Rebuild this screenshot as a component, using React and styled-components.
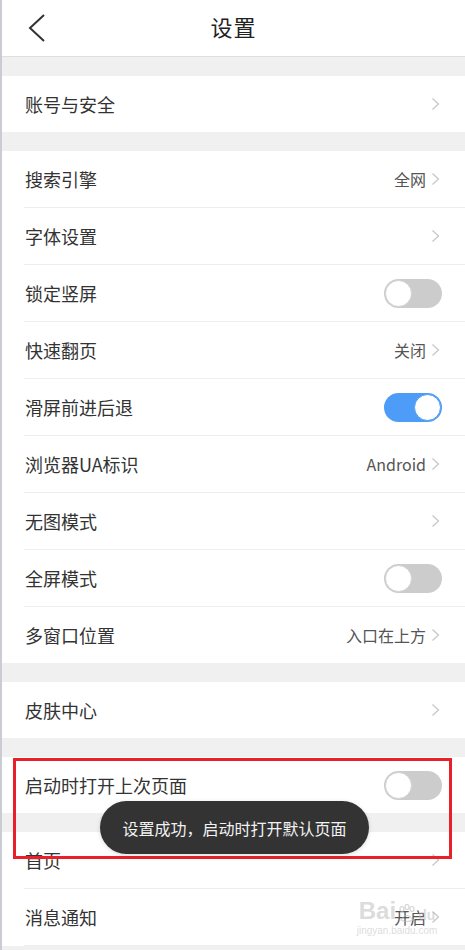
import React from "react";
import styled, { createGlobalStyle } from "styled-components";

const Global = createGlobalStyle`
  html, body { margin: 0; padding: 0; background: #fff; }
  body { font-family: "Noto Sans CJK SC", "Noto Sans", sans-serif; }
`;

const Page = styled.div`
  position: relative;
  width: 465px;
  height: 950px;
  overflow: hidden;
  background: #f0f0f0;
  box-sizing: border-box;
  border-left: 2px solid #c9ccd1;
`;

const Header = styled.header`
  height: 56px;
  background: #fff;
  border-bottom: 1px solid #dedede;
  display: flex;
  align-items: center;
  justify-content: center;
  position: relative;
`;

const BackBtn = styled.div`
  position: absolute;
  left: 24px;
  top: 13px;
  width: 22px;
  height: 30px;
  display: flex;
`;

const Title = styled.h1`
  margin: 0 0 4px 0;
  font-size: 22px;
  font-weight: 400;
  color: #222;
  letter-spacing: 1px;
`;

const Group = styled.section`
  background: #fff;
  margin-top: 19px;
`;

const Row = styled.div`
  padding-left: 22px;
  background: #fff;
`;

const RowInner = styled.div`
  height: 56px;
  display: flex;
  align-items: center;
  justify-content: space-between;
  padding-right: ${(p) => (p.$toggle ? "23px" : "25px")};
  border-bottom: ${(p) => (p.$last ? "none" : "1px solid #eeeeee")};
`;

const Label = styled.span`
  font-size: 18px;
  color: #333;
  padding-left: 1px;
`;

const Right = styled.div`
  display: flex;
  align-items: center;
  gap: 5px;
`;

const Value = styled.span`
  font-size: 16px;
  color: #555;
`;

const Track = styled.div`
  width: 58px;
  height: 29px;
  border-radius: 15px;
  box-sizing: border-box;
  background: ${(p) => (p.$on ? "#4d9cf8" : "#cccccc")};
  position: relative;
`;

const Knob = styled.div`
  position: absolute;
  top: 1px;
  ${(p) => (p.$on ? "right: 1px;" : "left: 1px;")}
  width: 27px;
  height: 27px;
  border-radius: 50%;
  background: #fff;
  box-sizing: border-box;
  border: 1px solid ${(p) => (p.$on ? "#4d9cf8" : "#d2d2d2")};
`;

const Toast = styled.div`
  position: absolute;
  left: 98px;
  top: 801px;
  width: 269px;
  height: 53px;
  border-radius: 27px;
  background: #333333;
  color: #f2f2f2;
  font-size: 16px;
  display: flex;
  align-items: center;
  justify-content: center;
  box-shadow: 0 1px 4px rgba(0, 0, 0, 0.15);
`;

const RedBox = styled.div`
  position: absolute;
  left: 11px;
  top: 758px;
  width: 439px;
  height: 101px;
  box-sizing: border-box;
  border: 3px solid #e8202a;
  pointer-events: none;
`;

const Watermark = styled.div`
  position: absolute;
  left: 340px;
  top: 898px;
  width: 110px;
  display: flex;
  flex-direction: column;
  align-items: center;
  color: rgba(185, 185, 185, 0.5);
  font-family: "Liberation Sans", sans-serif;
  pointer-events: none;
`;

const WmTop = styled.div`
  display: flex;
  align-items: flex-end;
  gap: 1px;
  font-size: 24px;
  font-weight: 700;
  line-height: 26px;
`;

const WmSmall = styled.span`
  font-size: 14px;
  line-height: 18px;
`;

const WmSub = styled.div`
  font-size: 10px;
  line-height: 14px;
`;

const Chevron = () => (
  <svg width="9" height="14" viewBox="0 0 9 14">
    <polyline points="1.5,1.5 7.5,7 1.5,12.5" fill="none" stroke="#c8c8c8" strokeWidth="1.3" />
  </svg>
);

const Toggle = ({ on }) => (
  <Track $on={on}>
    <Knob $on={on} />
  </Track>
);

const Item = ({ label, value, toggle, on, last }) => (
  <Row>
    <RowInner $toggle={toggle} $last={last}>
      <Label>{label}</Label>
      {toggle ? (
        <Toggle on={on} />
      ) : (
        <Right>
          {value && <Value>{value}</Value>}
          <Chevron />
        </Right>
      )}
    </RowInner>
  </Row>
);

export default function App() {
  return (
    <>
      <Global />
      <Page>
        <Header>
          <BackBtn>
            <svg width="22" height="30" viewBox="0 0 22 30">
              <polyline points="18,2 4,15 18,28" fill="none" stroke="#333" strokeWidth="2" />
            </svg>
          </BackBtn>
          <Title>设置</Title>
        </Header>

        <Group>
          <Item label="账号与安全" last />
        </Group>

        <Group>
          <Item label="搜索引擎" value="全网" />
          <Item label="字体设置" />
          <Item label="锁定竖屏" toggle on={false} />
          <Item label="快速翻页" value="关闭" />
          <Item label="滑屏前进后退" toggle on />
          <Item label="浏览器UA标识" value="Android" />
          <Item label="无图模式" />
          <Item label="全屏模式" toggle on={false} />
          <Item label="多窗口位置" value="入口在上方" last />
        </Group>

        <Group>
          <Item label="皮肤中心" last />
        </Group>

        <Group>
          <Item label="启动时打开上次页面" toggle on={false} last />
        </Group>

        <Group>
          <Item label="首页" />
          <Item label="消息通知" value="开启" />
        </Group>

        <RedBox />
        <Toast>设置成功，启动时打开默认页面</Toast>
        <Watermark>
          <WmTop>
            Bai
            <svg width="20" height="20" viewBox="0 0 20 20">
              <g fill="none" stroke="rgba(185,185,185,0.6)" strokeWidth="1.2">
                <ellipse cx="5" cy="5" rx="2" ry="2.5" />
                <ellipse cx="10" cy="3" rx="2" ry="2.5" />
                <ellipse cx="15" cy="5" rx="2" ry="2.5" />
                <path d="M4 16 Q10 7 16 16 Q10 19 4 16 Z" />
              </g>
            </svg>
            <WmSmall>du</WmSmall>
          </WmTop>
          <WmSub>jingyan.baidu.com</WmSub>
        </Watermark>
      </Page>
    </>
  );
}
